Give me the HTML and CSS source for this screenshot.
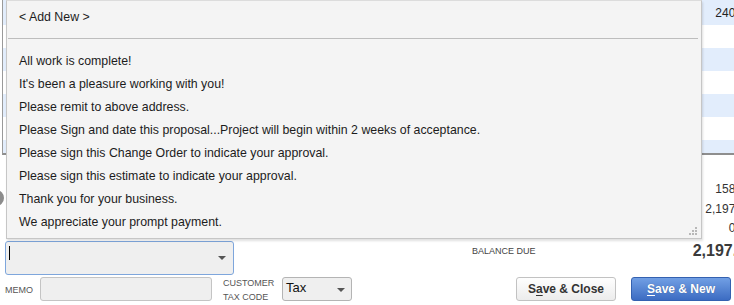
FILE: index.html
```html
<!DOCTYPE html>
<html>
<head>
<meta charset="utf-8">
<link rel="stylesheet" href="styles.css">
</head>
<body>
<div class="screen">
  <div class="grid">
    <div class="row blue first"><span class="amt">240.00</span></div>
    <div class="row"></div>
    <div class="row blue"></div>
    <div class="row"></div>
    <div class="row blue"></div>
    <div class="row"></div>
    <div class="row blue"></div>
  </div>
  <div class="totals">
    <div class="bubble"></div>
    <div class="nums">
      <div>158.52</div>
      <div>2,197.52</div>
      <div>0.00</div>
    </div>
  </div>
  <div class="mid">
    <div class="combo"><span class="caret"></span><span class="arrow"></span></div>
    <div class="bal-label">BALANCE DUE</div>
    <div class="bal-amt">2,197.52</div>
  </div>
  <div class="bottom">
    <div class="lbl memo-lbl">MEMO</div>
    <div class="memo"></div>
    <div class="lbl tax-lbl">CUSTOMER<br>TAX CODE</div>
    <div class="taxsel"><span>Tax</span><span class="arrow"></span></div>
    <button class="btn btn-close">S<u>a</u>ve &amp; Close</button>
    <button class="btn btn-new"><u>S</u>ave &amp; New</button>
  </div>

  <div class="popup">
    <div class="head">&lt; Add New &gt;</div>
    <div class="sep"></div>
    <ul class="items">
      <li>All work is complete!</li>
      <li>It's been a pleasure working with you!</li>
      <li>Please remit to above address.</li>
      <li>Please Sign and date this proposal...Project will begin within 2 weeks of acceptance.</li>
      <li>Please sign this Change Order to indicate your approval.</li>
      <li>Please sign this estimate to indicate your approval.</li>
      <li>Thank you for your business.</li>
      <li>We appreciate your prompt payment.</li>
    </ul>
    <svg class="grip" width="9" height="9" viewBox="0 0 9 9">
      <rect x="6" y="0" width="2" height="2" fill="#b8b8b8"/>
      <rect x="3" y="3" width="2" height="2" fill="#b8b8b8"/>
      <rect x="6" y="3" width="2" height="2" fill="#b8b8b8"/>
      <rect x="0" y="6" width="2" height="2" fill="#b8b8b8"/>
      <rect x="3" y="6" width="2" height="2" fill="#b8b8b8"/>
      <rect x="6" y="6" width="2" height="2" fill="#b8b8b8"/>
    </svg>
  </div>
</div>
</body>
</html>
```

FILE: styles.css
```css
html, body {
  margin: 0;
  padding: 0;
  background: #ffffff;
  overflow: hidden;
}
body {
  font-family: "Liberation Sans", Arial, sans-serif;
  color: #222;
}
.screen {
  position: relative;
  width: 760px;
  height: 305px;
}
.grid {
  height: 153px;
  overflow: hidden;
  margin-left: 2px;
  border-left: 1px solid #9a9a9a;
  border-bottom: 2px solid #8e8e8e;
}
.row {
  height: 23px;
  background: #ffffff;
  display: flex;
  justify-content: flex-end;
  align-items: center;
  padding-right: 8px;
  font-size: 12px;
  color: #222;
}
.row.first {
  height: 25px;
}
.row.blue {
  background: #e2edfc;
}
.totals {
  height: 86px;
  display: flex;
  justify-content: space-between;
}
.bubble {
  width: 16px;
  height: 16px;
  border-radius: 50%;
  background: #8c8c8c;
  margin-left: -12px;
  margin-top: 35px;
}
.nums {
  margin-top: 25px;
  padding-right: 8px;
  font-size: 12px;
  line-height: 19.5px;
  text-align: right;
  color: #333;
}
.mid {
  height: 36px;
  display: flex;
  align-items: flex-start;
}
.combo {
  position: relative;
  margin-left: 5px;
  width: 227px;
  height: 32px;
  border: 1px solid #7ea6dc;
  border-radius: 3px;
  background: #efefef;
}
.caret {
  display: block;
  margin: 4px 0 0 3px;
  width: 1px;
  height: 14px;
  background: #000;
}
.arrow {
  position: absolute;
  width: 0;
  height: 0;
  border-left: 4px solid transparent;
  border-right: 4px solid transparent;
  border-top: 4px solid #555;
}
.combo .arrow {
  right: 7px;
  top: 14px;
}
.bal-label {
  margin-left: 238px;
  margin-top: 5px;
  font-size: 9px;
  color: #444;
}
.bal-amt {
  margin-left: auto;
  padding-right: 5px;
  font-size: 16px;
  font-weight: bold;
  color: #3a3a3a;
  margin-top: 1px;
}
.bottom {
  display: flex;
  align-items: flex-start;
}
.lbl {
  font-size: 9px;
  color: #555;
  line-height: 14px;
}
.memo-lbl {
  margin-left: 5px;
  margin-top: 6px;
  width: 35px;
}
.memo {
  width: 170px;
  height: 22px;
  border: 1px solid #c4c4c4;
  border-radius: 3px;
  background: #efefef;
}
.tax-lbl {
  margin-left: 11px;
  margin-top: -1px;
  width: 60px;
}
.taxsel {
  position: relative;
  height: 22px;
  border: 1px solid #b4b4b4;
  border-radius: 3px;
  background: #efefef;
  font-size: 13px;
  color: #111;
  line-height: 20px;
  padding-left: 3px;
  box-sizing: content-box;
  width: 65px;
  margin-left: -1px;
}
.taxsel .arrow {
  right: 6px;
  top: 10px;
}
.btn {
  font-family: "Liberation Sans", Arial, sans-serif;
  font-weight: bold;
  font-size: 12px;
  height: 24px;
  width: 100px;
  padding: 0;
  margin-top: 0;
  border-radius: 3px;
  cursor: pointer;
}
.btn-close {
  margin-left: 164px;
  background: linear-gradient(#fefefe, #ececec);
  border: 1px solid #c2c2c2;
  color: #333;
}
.btn-new {
  margin-left: 15px;
  background: linear-gradient(#719fe4, #3c6cc2);
  border: 1px solid #3461b0;
  color: #fff;
  text-shadow: 0 0 1px rgba(0,0,0,0.3);
}
.btn u {
  text-decoration-thickness: 1px;
  text-underline-offset: 2px;
}

.popup {
  position: absolute;
  left: 6px;
  top: 0;
  width: 694px;
  height: 237px;
  background: #f4f4f4;
  border: 1px solid #c6c6c6;
  border-top-color: #dcdcdc;
  box-shadow: 1px 2px 2px rgba(0,0,0,0.12);
  font-size: 12.35px;
  color: #1c1c1c;
}
.head {
  padding-left: 12px;
  margin-top: 5px;
  line-height: 23px;
}
.sep {
  margin: 9px 3px 0 1px;
  height: 1px;
  background: #bdbdbd;
}
.items {
  list-style: none;
  margin: 11px 0 0 0;
  padding: 0 0 0 12px;
}
.items li {
  line-height: 23px;
  height: 23px;
}
.grip {
  position: absolute;
  right: 3px;
  bottom: 2px;
}
```
